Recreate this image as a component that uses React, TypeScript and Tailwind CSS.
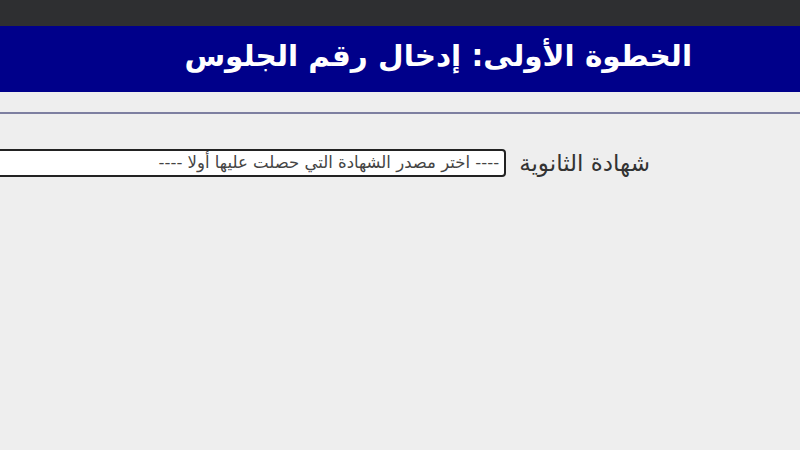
export default function App() {
  return (
    <div dir="rtl" className="w-[800px] h-[450px] overflow-hidden bg-[#eeeeee] font-['DejaVu_Sans',sans-serif]">
      <div className="h-[26px] bg-[#2e2f31]" />
      <div className="h-[66px] bg-[#00008a] flex items-center pr-[108px] pb-[4px]">
        <h1 className="text-[29.5px] font-bold text-white leading-none">الخطوة الأولى: إدخال رقم الجلوس</h1>
      </div>
      <div className="h-[20px] bg-[#eeeeee]" />
      <div className="h-[2px] bg-[#7d7fa0]" />
      <div className="flex items-center pt-[35px] pr-[150px] gap-[13px]">
        <label className="text-[23px] text-[#333333] whitespace-nowrap leading-none">شهادة الثانوية</label>
        <div className="w-[540px] h-[28px] shrink-0 bg-white border-2 border-[#222222] rounded-[4px] flex items-center pr-[5px]">
          <span className="text-[16.5px] text-[#444444] whitespace-nowrap">---- اختر مصدر الشهادة التي حصلت عليها أولا ----</span>
        </div>
      </div>
    </div>
  );
}
